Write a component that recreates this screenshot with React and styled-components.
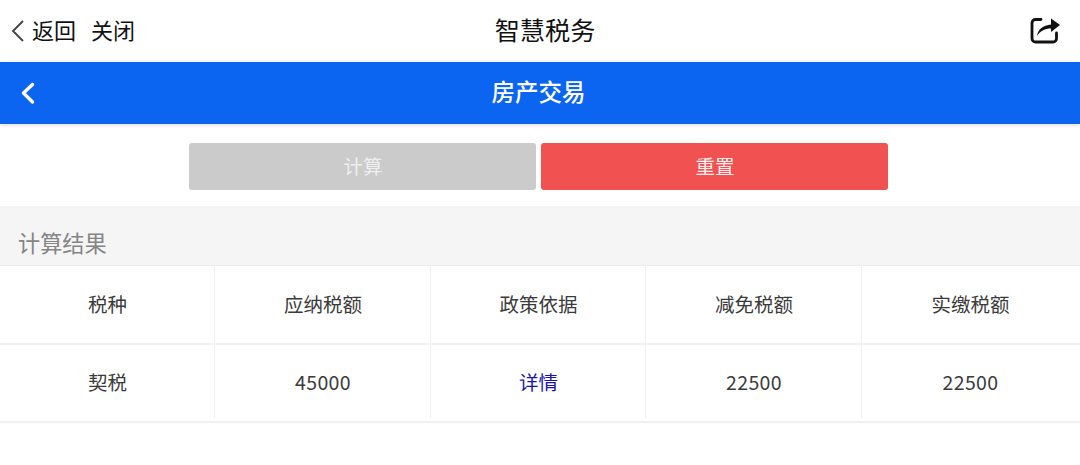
import React from 'react';
import styled, { createGlobalStyle } from 'styled-components';

const GlobalStyle = createGlobalStyle`
  html, body {
    margin: 0;
    padding: 0;
    background: #fff;
    font-family: "Noto Sans CJK SC", "Noto Sans", sans-serif;
  }
`;

const Page = styled.div`
  width: 1080px;
  height: 465px;
  overflow: hidden;
  background: #fff;
`;

const TopBar = styled.div`
  display: grid;
  grid-template-columns: 1fr auto 1fr;
  align-items: center;
  box-sizing: border-box;
  height: 62px;
  padding: 0 20px 5px 11px;
  color: #111;
`;

const NavLinks = styled.div`
  display: flex;
  align-items: center;
  font-size: 22px;
`;

const NavChevron = styled.svg`
  margin-top: 5px;
`;

const NavLink = styled.span`
  margin-left: ${({ $gap }) => $gap}px;
`;

const AppTitle = styled.div`
  margin-left: 19px;
  font-size: 25.2px;
`;

const ShareButton = styled.div`
  display: flex;
  justify-content: flex-end;
  margin-top: 4px;
`;

const Header = styled.div`
  position: relative;
  z-index: 1;
  display: flex;
  align-items: center;
  justify-content: center;
  box-sizing: border-box;
  height: 62px;
  padding: 0 3px 4px 0;
  background: #0b65f1;
  color: #fff;
  font-size: 23.5px;
  font-weight: 500;
  box-shadow: 0 1px 4px rgba(0, 0, 0, 0.16);
`;

const BackIcon = styled.svg`
  position: absolute;
  left: 20px;
  top: 19px;
`;

const Actions = styled.div`
  display: flex;
  justify-content: center;
  gap: 5px;
  padding: 19px 4px 16px 0;
`;

const ActionButton = styled.div`
  display: flex;
  align-items: center;
  justify-content: center;
  box-sizing: border-box;
  width: 347px;
  height: 47px;
  padding: 0 0 3px 2px;
  border-radius: 3px;
  font-size: 19.5px;
  color: ${({ $primary }) => ($primary ? '#fdeeee' : '#eeeeee')};
  background: ${({ $primary }) => ($primary ? '#f25152' : '#cbcbcb')};
`;

const SectionTitle = styled.div`
  display: flex;
  align-items: flex-end;
  box-sizing: border-box;
  height: 59px;
  padding: 0 0 7px 18px;
  background: #f5f5f5;
  color: #858585;
  font-size: 22.2px;
  line-height: 32px;
`;

const Table = styled.div`
  border-top: 1px solid #ececec;
`;

const Row = styled.div`
  display: grid;
  grid-template-columns: 214px 216px 215px 216px 217px;
  box-sizing: border-box;
  height: ${({ $height }) => $height}px;
  border-bottom: 2px solid #f1f1f1;
`;

const Cell = styled.div`
  display: flex;
  align-items: center;
  justify-content: center;
  height: ${({ $short }) => ($short ? '73px' : 'auto')};
  padding: 0 0 ${({ $short }) => ($short ? '0' : '2px')} 1px;
  box-sizing: border-box;
  font-size: 19.5px;
  letter-spacing: ${({ $number }) => ($number ? '0.4px' : '0')};
  color: ${({ $link }) => ($link ? '#1a14a8' : '#3b3b3b')};
  border-left: ${({ $first }) => ($first ? 'none' : '1px solid #f0f0f0')};
`;

const columns = ['税种', '应纳税额', '政策依据', '减免税额', '实缴税额'];
const values = ['契税', '45000', '详情', '22500', '22500'];

export default function App() {
  return (
    <Page>
      <GlobalStyle />
      <TopBar>
        <NavLinks>
          <NavChevron width="14" height="22" viewBox="0 0 14 22" fill="none">
            <path d="M12 1 L2 11 L12 21" stroke="#444" strokeWidth="1.9" />
          </NavChevron>
          <NavLink $gap={7}>返回</NavLink>
          <NavLink $gap={15}>关闭</NavLink>
        </NavLinks>
        <AppTitle>智慧税务</AppTitle>
        <ShareButton>
          <svg width="30" height="28" viewBox="0 0 30 28" fill="none">
            <path
              d="M11 2.5 H5.5 a3.5 3.5 0 0 0 -3.5 3.5 V21.5 a3.5 3.5 0 0 0 3.5 3.5 H23 a3.5 3.5 0 0 0 3.5 -3.5 V16"
              stroke="#111"
              strokeWidth="2.8"
              strokeLinecap="round"
            />
            <path
              d="M7 19 C8 12 13 8.5 21 7.5 V1.5 L30 8 L21 15 V11.5 C15 11.5 10 14 7 19 Z"
              fill="#111"
            />
          </svg>
        </ShareButton>
      </TopBar>
      <Header>
        <BackIcon width="16" height="24" viewBox="0 0 16 24" fill="none">
          <path
            d="M12.5 3.5 L3.5 12 L12.5 21"
            stroke="#fff"
            strokeWidth="3.4"
            strokeLinecap="round"
            strokeLinejoin="round"
          />
        </BackIcon>
        房产交易
      </Header>
      <Actions>
        <ActionButton>计算</ActionButton>
        <ActionButton $primary>重置</ActionButton>
      </Actions>
      <SectionTitle>计算结果</SectionTitle>
      <Table>
        <Row $height={79}>
          {columns.map((label, i) => (
            <Cell key={label} $first={i === 0}>{label}</Cell>
          ))}
        </Row>
        <Row $height={78}>
          {values.map((value, i) => (
            <Cell
              key={i}
              $short
              $first={i === 0}
              $link={value === '详情'}
              $number={/^\d+$/.test(value)}
            >
              {value}
            </Cell>
          ))}
        </Row>
      </Table>
    </Page>
  );
}
